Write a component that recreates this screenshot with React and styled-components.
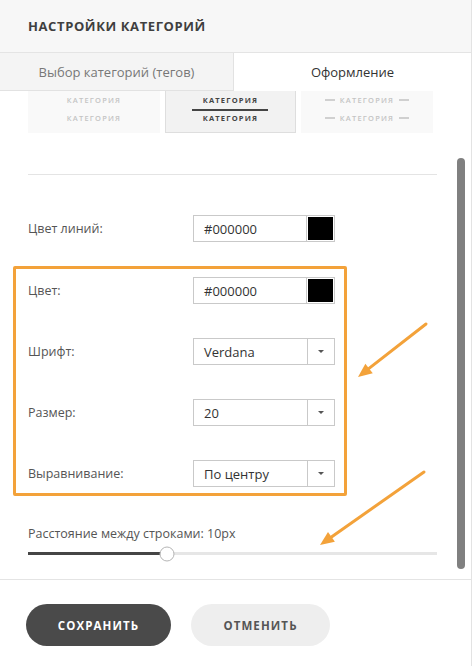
import React from "react";
import styled, { createGlobalStyle } from "styled-components";

const GlobalStyle = createGlobalStyle`
  html, body { margin: 0; padding: 0; background: #fff; }
  body { font-family: "Open Sans", "Liberation Sans", sans-serif; color: #444; }
  * { box-sizing: border-box; }
`;

const Panel = styled.div`
  position: relative;
  width: 472px;
  height: 666px;
  border-right: 1px solid #e3e3e3;
  display: flex;
  flex-direction: column;
  background: #fff;
  overflow: hidden;
`;

const Header = styled.div`
  height: 53px;
  flex: none;
  background: #f7f7f7;
  border-bottom: 1px solid #e4e4e4;
  display: flex;
  align-items: center;
  padding-left: 28px;
  font-size: 13px;
  font-weight: 700;
  letter-spacing: 0.6px;
  color: #3f3f3f;
`;

const Tabs = styled.div`
  display: grid;
  grid-template-columns: 234px 1fr;
  height: 38px;
  flex: none;
  position: relative;
  z-index: 2;
`;

const Tab = styled.div`
  display: flex;
  align-items: center;
  justify-content: center;
  font-size: 13px;
  color: ${(p) => (p.$active ? "#333" : "#777")};
  background: ${(p) => (p.$active ? "#fff" : "#f4f4f4")};
  border-right: ${(p) => (p.$active ? "none" : "1px solid #e2e2e2")};
  border-bottom: ${(p) => (p.$active ? "none" : "1px solid #e2e2e2")};
`;

const Body = styled.div`
  flex: 1;
  overflow: hidden;
  border-bottom: 1px solid #e4e4e4;
`;

const Inner = styled.div`
  margin-top: -8px;
  padding: 0 34px 0 28px;
  display: flex;
  flex-direction: column;
`;

const Cards = styled.div`
  display: grid;
  grid-template-columns: 132px 131px 132px;
  gap: 5px;
`;

const Card = styled.div`
  height: 50px;
  background: ${(p) => (p.$selected ? "#f2f2f2" : "#f9f9f9")};
  border: 1px solid ${(p) => (p.$selected ? "#dedede" : "#f9f9f9")};
  display: flex;
  flex-direction: column;
  align-items: center;
  justify-content: center;
  gap: 8px;
  padding-top: 2px;
`;

const CardText = styled.div`
  font-size: 7.5px;
  font-weight: ${(p) => (p.$selected ? 700 : 600)};
  letter-spacing: 1.2px;
  line-height: 10px;
  color: ${(p) => (p.$selected ? "#444" : "#c4c4c4")};
  display: flex;
  align-items: center;
  gap: 5px;
  position: relative;
`;

const Dash = styled.span`
  width: 10px;
  height: 2px;
  background: #d0d0d0;
  display: inline-block;
`;

const Underline = styled.div`
  position: absolute;
  left: 50%;
  bottom: -6px;
  transform: translateX(-50%);
  width: 76px;
  height: 2px;
  background: #444;
`;

const Divider = styled.div`
  height: 1px;
  background: #e4e4e4;
  margin-top: 41px;
`;

const Row = styled.div`
  display: grid;
  grid-template-columns: 165px 142px;
  align-items: center;
  height: 27px;
  margin-top: ${(p) => p.$mt || 0}px;
`;

const Label = styled.div`
  font-size: 12.5px;
  color: #555;
`;

const Field = styled.div`
  height: 27px;
  border: 1px solid #c9c9c9;
  display: flex;
  align-items: stretch;
  background: #fff;
`;

const FieldText = styled.div`
  flex: 1;
  display: flex;
  align-items: center;
  padding-left: 10px;
  font-size: 13px;
  color: #333;
`;

const Swatch = styled.div`
  width: 28px;
  border-left: 1px solid #c9c9c9;
  padding: 1px;
  display: flex;
`;

const SwatchFill = styled.div`
  flex: 1;
  background: ${(p) => p.$color};
`;

const Caret = styled.div`
  width: 27px;
  border-left: 1px solid #c9c9c9;
  display: flex;
  align-items: center;
  justify-content: center;
  &::after {
    content: "";
    border-left: 3px solid transparent;
    border-right: 3px solid transparent;
    border-top: 3px solid #555;
  }
`;

const Highlight = styled.div`
  margin: 24px 0 0 -15px;
  width: 334px;
  border: 3px solid #f3a23a;
  border-radius: 2px;
  padding: 8px 9px 6px 12px;
  display: flex;
  flex-direction: column;
  gap: 34px;
`;

const SliderLabel = styled.div`
  margin-top: 29px;
  font-size: 12.5px;
  color: #555;
  line-height: 18px;
`;

const Track = styled.div`
  position: relative;
  margin-top: 9px;
  height: 3px;
  background: #e6e6e6;
`;

const TrackFill = styled.div`
  position: absolute;
  left: 0;
  top: 0;
  bottom: 0;
  background: #454545;
`;

const Thumb = styled.div`
  position: absolute;
  top: 50%;
  width: 15px;
  height: 15px;
  border-radius: 50%;
  background: #fff;
  border: 1px solid #b5b5b5;
  transform: translate(-50%, -50%);
`;

const Footer = styled.div`
  height: 86px;
  flex: none;
  display: flex;
  align-items: flex-start;
  gap: 20px;
  padding: 24px 0 0 26px;
`;

const Button = styled.button`
  height: 42px;
  width: ${(p) => p.$w}px;
  border: none;
  border-radius: 21px;
  font-family: inherit;
  font-size: 11.5px;
  font-weight: 700;
  letter-spacing: 1.1px;
  background: ${(p) => (p.$primary ? "#4a4a4a" : "#eeeeee")};
  color: ${(p) => (p.$primary ? "#fff" : "#555")};
  cursor: pointer;
`;

const ScrollThumb = styled.div`
  position: absolute;
  left: 457px;
  top: 158px;
  width: 8px;
  height: 411px;
  border-radius: 4px;
  background: #808080;
`;

const Arrows = styled.svg`
  position: absolute;
  left: 0;
  top: 0;
  pointer-events: none;
`;

function ColorRow({ label, value, mt }) {
  return (
    <Row $mt={mt}>
      <Label>{label}</Label>
      <Field>
        <FieldText>{value}</FieldText>
        <Swatch>
          <SwatchFill $color={value} />
        </Swatch>
      </Field>
    </Row>
  );
}

function SelectRow({ label, value }) {
  return (
    <Row>
      <Label>{label}</Label>
      <Field>
        <FieldText>{value}</FieldText>
        <Caret />
      </Field>
    </Row>
  );
}

function Arrow({ x1, y1, x2, y2 }) {
  const a = Math.atan2(y2 - y1, x2 - x1);
  const L = 14, W = 6;
  const bx = x2 - L * Math.cos(a), by = y2 - L * Math.sin(a);
  const px = -Math.sin(a) * W, py = Math.cos(a) * W;
  return (
    <g>
      <line x1={x1} y1={y1} x2={bx} y2={by} stroke="#f3a23a" strokeWidth="3" strokeLinecap="round" />
      <polygon points={`${x2},${y2} ${bx + px},${by + py} ${bx - px},${by - py}`} fill="#f3a23a" />
    </g>
  );
}

export default function App() {
  const sliderPct = (139 / 410) * 100;
  return (
    <>
      <GlobalStyle />
      <Panel>
        <Header>НАСТРОЙКИ КАТЕГОРИЙ</Header>
        <Tabs>
          <Tab>Выбор категорий (тегов)</Tab>
          <Tab $active>Оформление</Tab>
        </Tabs>
        <Body>
          <Inner>
            <Cards>
              <Card>
                <CardText>КАТЕГОРИЯ</CardText>
                <CardText>КАТЕГОРИЯ</CardText>
              </Card>
              <Card $selected>
                <CardText $selected>
                  КАТЕГОРИЯ
                  <Underline />
                </CardText>
                <CardText $selected>КАТЕГОРИЯ</CardText>
              </Card>
              <Card>
                <CardText><Dash />КАТЕГОРИЯ<Dash /></CardText>
                <CardText><Dash />КАТЕГОРИЯ<Dash /></CardText>
              </Card>
            </Cards>
            <Divider />
            <ColorRow label="Цвет линий:" value="#000000" mt={40} />
            <Highlight>
              <ColorRow label="Цвет:" value="#000000" />
              <SelectRow label="Шрифт:" value="Verdana" />
              <SelectRow label="Размер:" value="20" />
              <SelectRow label="Выравнивание:" value="По центру" />
            </Highlight>
            <SliderLabel>Расстояние между строками: 10px</SliderLabel>
            <Track>
              <TrackFill style={{ width: `${sliderPct}%` }} />
              <Thumb style={{ left: `${sliderPct}%` }} />
            </Track>
          </Inner>
        </Body>
        <Footer>
          <Button $primary $w={145}>СОХРАНИТЬ</Button>
          <Button $w={139}>ОТМЕНИТЬ</Button>
        </Footer>
        <ScrollThumb />
        <Arrows width="472" height="666">
          <Arrow x1={426} y1={324} x2={358} y2={377} />
          <Arrow x1={424} y1={472} x2={320} y2={545} />
        </Arrows>
      </Panel>
    </>
  );
}
